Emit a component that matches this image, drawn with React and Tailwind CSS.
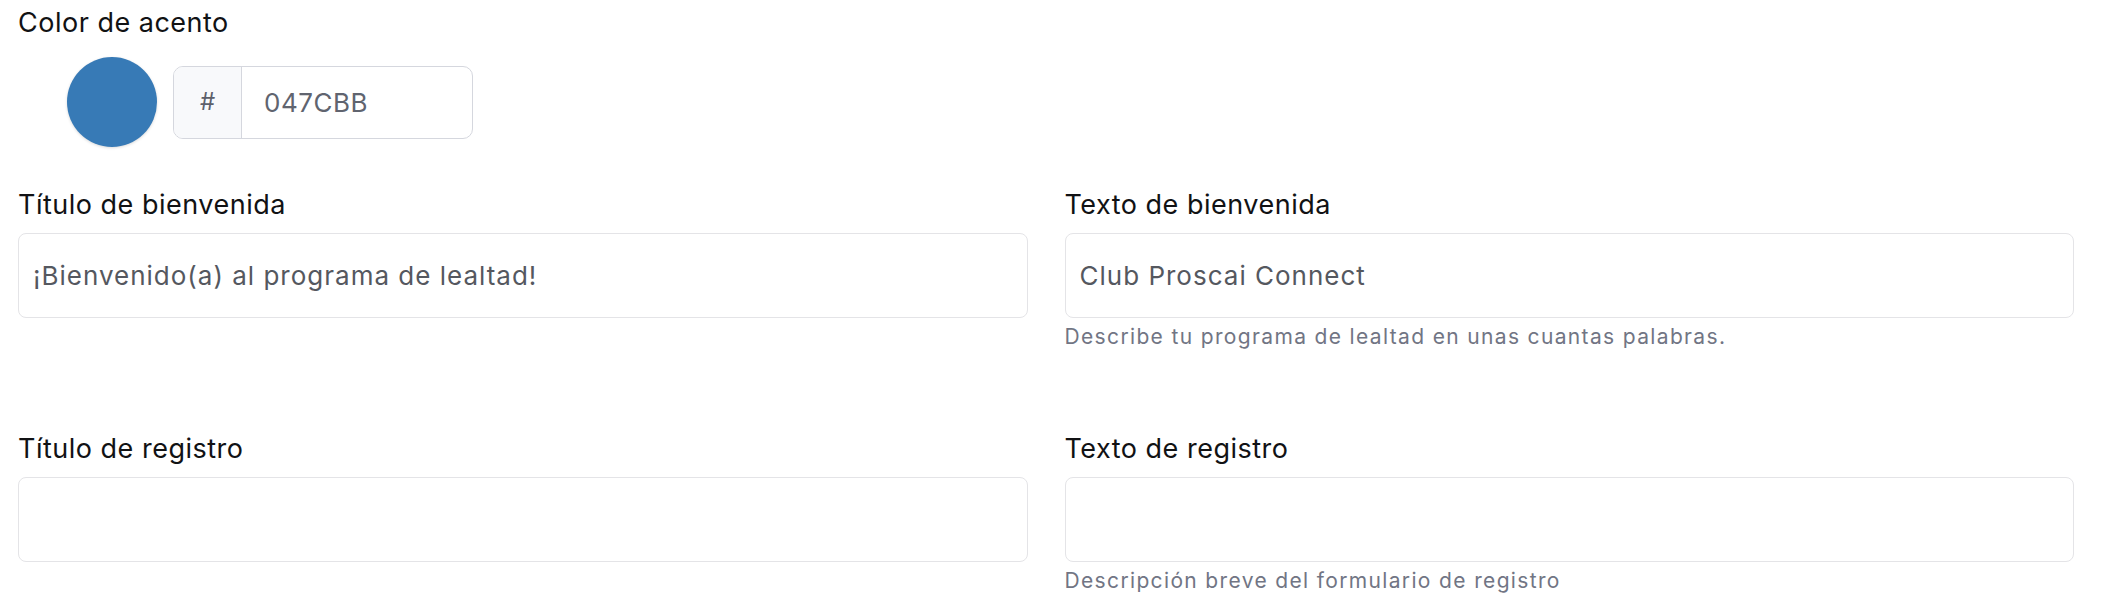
import React from "react";

const Field = ({ label, value, help }) => {
    return (
        <div className="flex flex-col">
            <label className="text-[27px] leading-[34px] text-[#111214] tracking-[0.5px]">{label}</label>
            <div className="mt-[11px] h-[85px] w-full rounded-[8px] border border-[#e4e4e7] bg-white flex items-center px-[14px]">
                <span className="text-[26px] text-[#55585f] tracking-[1px]">{value}</span>
            </div>
            {help && (
                <p className="mt-[5px] text-[21px] leading-[28px] text-[#717584] tracking-[1.35px]">{help}</p>
            )}
        </div>
    );
};

const App = () => {
    return (
        <div className="min-h-screen bg-white pl-[18px] pr-[36px] pt-[6px] font-['Inter',sans-serif]">
            <div className="flex flex-col">
                <label className="text-[27px] leading-[34px] text-[#111214] tracking-[0.5px]">Color de acento</label>
                <div className="mt-[17px] flex items-center gap-[16px] pl-[49px]">
                    <div className="h-[90px] w-[90px] rounded-full bg-[#377ab6] shadow-[0_1px_3px_rgba(0,0,0,0.15)]" />
                    <div className="flex h-[73px] w-[300px] overflow-hidden rounded-[10px] border border-[#d5d7de]">
                        <div className="flex w-[68px] items-center justify-center border-r border-[#d5d7de] bg-[#f8f9fb] text-[24px] text-[#5d606a]">
                            #
                        </div>
                        <div className="flex flex-1 items-center pl-[22px] text-[26px] text-[#60646f] tracking-[0.5px]">047CBB</div>
                    </div>
                </div>
            </div>

            <div className="mt-[41px] grid grid-cols-2 gap-x-[37px] gap-y-[81px]">
                <Field label="Título de bienvenida" value="¡Bienvenido(a) al programa de lealtad!" />
                <Field
                    label="Texto de bienvenida"
                    value="Club Proscai Connect"
                    help="Describe tu programa de lealtad en unas cuantas palabras."
                />
                <Field label="Título de registro" value="" />
                <Field label="Texto de registro" value="" help="Descripción breve del formulario de registro" />
            </div>
        </div>
    );
};

export default App;
